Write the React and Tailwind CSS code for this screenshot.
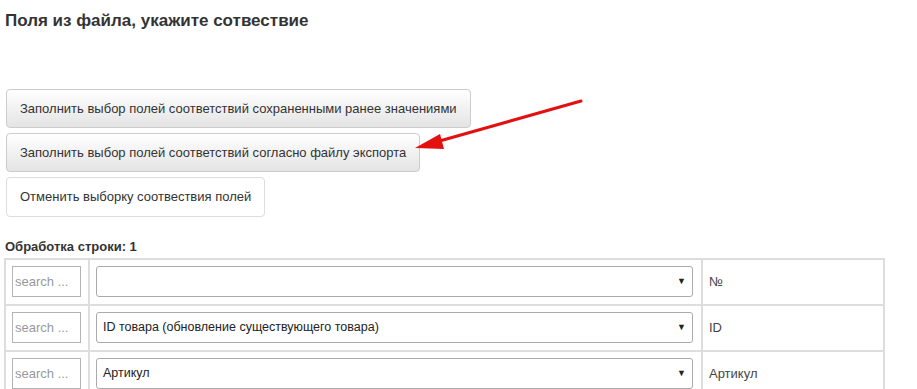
import React from "react";

const rows = [
  { value: "", label: "№" },
  { value: "ID товара (обновление существующего товара)", label: "ID" },
  { value: "Артикул", label: "Артикул" },
];

function Row({ value, label }) {
  return (
    <div className="flex h-[46px] border-b-2 border-[#ddd]">
      <div className="w-[84px] shrink-0 border-r-2 border-[#ddd] pl-[6px] pt-[6px]">
        <input
          placeholder="search ..."
          className="block h-[31px] w-[69px] border border-[#b4b4b4] bg-white px-[2px] text-[13px] text-[#333] outline-none placeholder:text-[#999]"
        />
      </div>
      <div className="w-[613px] shrink-0 border-r-2 border-[#ddd] pl-[6px] pr-[8px] pt-[6px]">
        <div className="flex h-[31px] items-center justify-between rounded-[3px] border border-[#aaa] bg-white pl-[6px] pr-[6px] text-[12.5px] text-[#222]">
          <span>{value}</span>
          <span className="text-[9px] text-[#222]">▼</span>
        </div>
      </div>
      <div className="flex w-[182px] shrink-0 items-center border-r-2 border-[#ddd] pl-[6px] text-[13px] text-[#444]">
        {label}
      </div>
    </div>
  );
}

export default function App() {
  return (
    <div
      className="relative min-h-[389px] bg-white pl-[5px] pt-[10px] text-[#333]"
      style={{ fontFamily: '"Liberation Sans", Arial, sans-serif' }}
    >
      <h3 className="text-[17px] font-bold leading-[21px] text-[#333]">
        Поля из файла, укажите сотвествие
      </h3>

      <div className="mt-[58px] flex flex-col items-start gap-[5px] pl-[1px]">
        <button className="h-[39px] rounded-[4px] border border-[#ccc] bg-gradient-to-b from-white to-[#e4e4e4] px-[13px] text-[13px] text-[#333]">
          Заполнить выбор полей соответствий сохраненными ранее значениями
        </button>
        <button className="h-[39px] rounded-[4px] border border-[#ccc] bg-gradient-to-b from-white to-[#e4e4e4] px-[13px] text-[13px] text-[#333]">
          Заполнить выбор полей соответствий согласно файлу экспорта
        </button>
        <button className="h-[40px] rounded-[4px] border border-[#ddd] bg-white px-[13px] text-[13px] text-[#333]">
          Отменить выборку соотвествия полей
        </button>
      </div>

      <div className="mt-[22px] text-[13px] font-bold leading-[16px] text-[#333]">
        Обработка строки: 1
      </div>

      <div className="mt-[3px] -ml-[1px] w-[881px] border-l-2 border-t-2 border-[#ddd]">
        {rows.map((r, i) => (
          <Row key={i} {...r} />
        ))}
      </div>

      <svg
        className="pointer-events-none absolute left-0 top-0"
        width="917"
        height="389"
        viewBox="0 0 917 389"
      >
        <line x1="581" y1="101" x2="436" y2="142" stroke="#e41010" strokeWidth="3" strokeLinecap="round" />
        <polygon points="415,148 440,134 444,149" fill="#e41010" />
      </svg>
    </div>
  );
}
